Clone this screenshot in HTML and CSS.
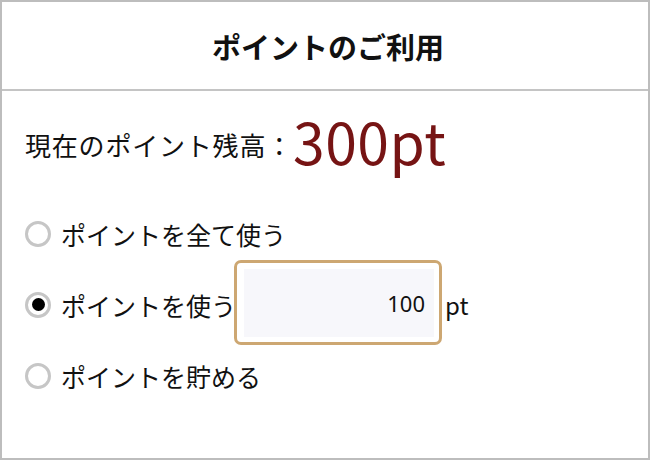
FILE: index.html
```html
<!DOCTYPE html>
<html lang="ja">
<head>
<meta charset="utf-8">
<link rel="stylesheet" href="styles.css">
</head>
<body>
<div class="frame">
  <header class="header"><h1 class="title">ポイントのご利用</h1></header>
  <main class="content">
    <div class="balance">
      <span class="balance-label">現在のポイント残高：</span><span class="balance-value">300pt</span>
    </div>
    <label class="option">
      <input class="radio" type="radio" name="use">
      <span class="option-text">ポイントを全て使う</span>
    </label>
    <label class="option">
      <input class="radio" type="radio" name="use" checked>
      <span class="option-text">ポイントを使う</span>
      <span class="amount-box"><input class="amount" type="text" value="100"></span>
      <span class="unit">pt</span>
    </label>
    <label class="option">
      <input class="radio" type="radio" name="use">
      <span class="option-text">ポイントを貯める</span>
    </label>
  </main>
</div>
</body>
</html>
```
FILE: styles.css
```css
html, body {
  margin: 0;
  padding: 0;
  background: #fff;
}
body {
  font-family: "Noto Sans CJK JP", "Noto Sans", sans-serif;
  color: #111;
}
.frame {
  width: 650px;
  height: 460px;
  box-sizing: border-box;
  border: 2px solid #bdbdbd;
  display: flex;
  flex-direction: column;
}
.header {
  height: 87px;
  border-bottom: 2px solid #c4c4c4;
  display: flex;
  align-items: center;
  justify-content: center;
}
.title {
  margin: 0;
  font-size: 29px;
  font-weight: 700;
  line-height: 1;
  padding-top: 2px;
  padding-left: 6px;
}
.content {
  display: flex;
  flex-direction: column;
  padding-left: 23px;
}
.balance {
  height: 107px;
  display: flex;
  align-items: center;
}
.balance-label {
  font-size: 26px;
  letter-spacing: 0.8px;
}
.balance-value {
  font-size: 57px;
  font-weight: 400;
  color: #761414;
  line-height: 1;
  margin-left: 0;
  padding-bottom: 8px;
  letter-spacing: 0.5px;
}
.option {
  height: 71px;
  display: flex;
  align-items: center;
  font-size: 25px;
}
.radio {
  appearance: none;
  -webkit-appearance: none;
  margin: 0;
  width: 26px;
  height: 26px;
  box-sizing: border-box;
  border: 3px solid #c6c6c6;
  border-radius: 50%;
  background: #fff;
  display: flex;
  align-items: center;
  justify-content: center;
  flex: none;
}
.radio:checked::after {
  content: "";
  width: 13px;
  height: 13px;
  border-radius: 50%;
  background: #000;
}
.option-text {
  margin-left: 10px;
}
.amount-box {
  margin-left: -2px;
  width: 208px;
  height: 85px;
  box-sizing: border-box;
  border: 3px solid #cda772;
  border-radius: 7px;
  padding: 6px 5px 5px 7px;
  background: #fff;
  display: flex;
  margin-top: -4px;
}
.amount {
  flex: 1;
  min-width: 0;
  border: none;
  outline: none;
  background: #f7f7fb;
  font-family: "Noto Sans", "Noto Sans CJK JP", sans-serif;
  font-size: 22px;
  color: #111;
  text-align: right;
  padding: 0 9px 0 0;
  margin: 0;
}
.unit {
  margin-left: 3px;
  font-size: 24px;
}
```
